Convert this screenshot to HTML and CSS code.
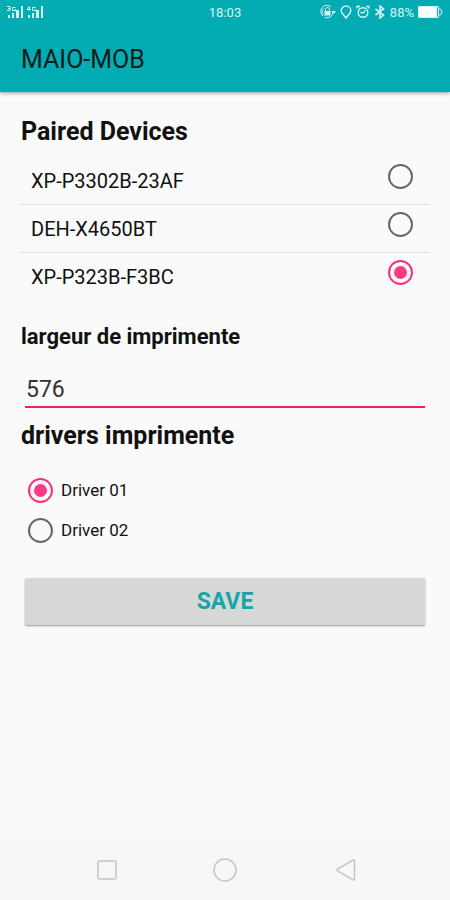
FILE: index.html
```html
<!DOCTYPE html>
<html lang="fr">
<head>
<meta charset="utf-8">
<meta name="viewport" content="width=device-width, initial-scale=1">
<title>MAIO-MOB</title>
<link rel="stylesheet" href="styles.css">
</head>
<body>
<header class="top">
  <div class="status">
    <div class="status-side">
      <svg class="signal" width="38" height="14" viewBox="0 0 38 14" fill="currentColor" aria-hidden="true">
        <g>
          <path d="M1 10h2v3H1zM5 8h2v5H5zM9 5h3v8H9zM14 1h2v12h-2z"/>
          <path d="M0 1.500h3v4H0M1 3.500h2M8.500 2.500H5.500v3h3v-1.500" fill="none" stroke="currentColor"/>
        </g>
        <g transform="translate(20 0)">
          <path d="M1 10h2v3H1zM5 8h2v5H5zM9 5h3v8H9zM14 1h2v12h-2z"/>
          <path d="M2.500 6V1.500L0 4.500h4M8.500 2.500H5.500v3h3v-1.500" fill="none" stroke="currentColor"/>
        </g>
      </svg>
    </div>
    <time class="clock">18:03</time>
    <div class="status-side status-right">
      <svg width="16" height="14" viewBox="0 0 16 14" fill="none" stroke="currentColor" aria-hidden="true">
        <path d="M11 1.800A6 6 0 0 0 3 11.200M5 12.500A6 6 0 0 0 13 7"/>
        <path d="M4 3.500a4.500 4.500 0 0 0 0 7" stroke-width=".8"/>
        <path d="M5.500 6V4.500a2 2 0 0 1 4 0V6"/>
        <path d="M4.500 6h6v4.500h-6zM11.500 6H16l-2.200 3z" fill="currentColor" stroke="none"/>
      </svg>
      <svg width="12" height="14" viewBox="0 0 12 14" fill="none" stroke="currentColor" stroke-width="1.500" aria-hidden="true">
        <path d="M6 1a4.800 4.800 0 0 1 4.800 4.800C10.800 8.600 8 10 6 13 4 10 1.200 8.600 1.200 5.800A4.800 4.800 0 0 1 6 1z"/>
      </svg>
      <svg width="14" height="14" viewBox="0 0 14 14" fill="none" stroke="currentColor" stroke-width="1.400" aria-hidden="true">
        <circle cx="7" cy="7.500" r="4.800"/>
        <path d="M1 3.500V1.500h3M13 3.500V1.500h-3M7 8l2.500-2.500M4.500 7.500L7 8"/>
      </svg>
      <svg width="12" height="14" viewBox="0 0 12 14" fill="none" stroke="currentColor" stroke-width="1.600" aria-hidden="true">
        <path d="M1.500 4l8 6L6 13V1l3.500 3-8 6"/>
      </svg>
      <span class="percent">88%</span>
      <svg class="battery" width="25" height="12" viewBox="0 0 25 12" aria-hidden="true">
        <path d="M.5.5h20v11H.5zM21 3h1.500l1.500 3-1.500 3H21" fill="none" stroke="currentColor"/>
        <path d="M1 1h18v10H1z" fill="#f4fffc"/>
      </svg>
    </div>
  </div>
  <h1 class="app-title">MAIO-MOB</h1>
</header>

<main class="content">
  <h2 class="heading">Paired Devices</h2>
  <div class="devices">
    <label class="device"><span>XP-P3302B-23AF</span><input class="radio" type="radio" name="device"></label>
    <label class="device"><span>DEH-X4650BT</span><input class="radio" type="radio" name="device"></label>
    <label class="device"><span>XP-P323B-F3BC</span><input class="radio" type="radio" name="device" checked></label>
  </div>

  <label class="heading heading-small" for="width">largeur de imprimente</label>
  <input class="field" id="width" type="text" inputmode="numeric" value="576">

  <h2 class="heading">drivers imprimente</h2>
  <div class="drivers">
    <label class="driver"><input class="radio" type="radio" name="driver" checked><span>Driver 01</span></label>
    <label class="driver"><input class="radio" type="radio" name="driver"><span>Driver 02</span></label>
  </div>

  <button class="save" type="button">SAVE</button>
</main>

<nav class="nav">
  <button class="nav-button" type="button" aria-label="Recents">
    <svg width="24" height="24" viewBox="0 0 24 24" fill="none" stroke="currentColor" stroke-width="1.500"><rect x="3" y="3" width="18" height="18" rx="1.500"/></svg>
  </button>
  <button class="nav-button" type="button" aria-label="Home">
    <svg width="24" height="24" viewBox="0 0 24 24" fill="none" stroke="currentColor" stroke-width="1.500"><circle cx="12" cy="12" r="11"/></svg>
  </button>
  <button class="nav-button" type="button" aria-label="Back">
    <svg width="30" height="24" viewBox="-6 0 30 24" fill="none" stroke="currentColor" stroke-width="1.500" stroke-linejoin="round"><path d="M3.500 11.200 19 2.200q1.500-.7 1.500 1v17.600q0 1.700-1.500 1L3.500 12.800q-1-.8 0-1.600z"/></svg>
  </button>
</nav>
</body>
</html>
```
FILE: styles.css
```css
* {
  box-sizing: border-box;
}

body {
  margin: 0;
  min-height: 100vh;
  display: flex;
  flex-direction: column;
  background: #fafafa;
  color: #111;
  font-family: Roboto, sans-serif;
}

.top {
  background: #03acb3;
  box-shadow: 0 1px 4px rgba(0, 0, 0, 0.4);
}

.status {
  display: flex;
  align-items: center;
  height: 24px;
  padding: 0 7px;
  color: #d5f5f5;
  font-size: 13px;
}

.status-side {
  flex: 1;
  display: flex;
  align-items: center;
}

.status-right {
  justify-content: flex-end;
  gap: 4px;
}

.app-title {
  margin: 0;
  padding: 3px 21px 0;
  color: #0a1a1a;
  font-size: 25px;
  font-weight: 400;
  line-height: 65px;
}

.content {
  flex: 1;
  padding: 24px 20px;
}

.heading {
  display: block;
  margin: 0;
  padding: 0 1px;
  font-size: 25px;
  font-weight: 700;
  line-height: 32px;
}

.heading-small {
  margin-top: 21px;
  font-size: 22px;
}

.devices {
  margin-top: 8px;
}

.device {
  display: flex;
  justify-content: space-between;
  height: 48px;
  padding: 8px 17px 0 11px;
  font-size: 20px;
  line-height: 34px;
}

.device + .device {
  padding-top: 7px;
  border-top: 1px solid #ddd;
}

.radio {
  appearance: none;
  flex: none;
  display: grid;
  place-items: center;
  width: 25px;
  height: 25px;
  margin: 0;
  border: 2px solid #666;
  border-radius: 50%;
}

.radio:checked {
  border-color: #f8307c;
}

.radio:checked::before {
  content: "";
  width: 13px;
  height: 13px;
  border-radius: 50%;
  background: #ff3a84;
}

.field {
  display: block;
  width: calc(100% - 10px);
  height: 41px;
  margin: 14px 5px 12px;
  padding: 5px 1px 0;
  border: 0;
  border-bottom: 2px solid #ee1c72;
  outline: 0;
  background: none;
  color: #333;
  font: 400 23px Roboto, sans-serif;
}

.drivers {
  margin: 18px 8px 0;
}

.driver {
  display: flex;
  align-items: center;
  gap: 8px;
  height: 40px;
  font-size: 17px;
}

.save {
  display: block;
  width: calc(100% - 10px);
  height: 47px;
  margin: 28px 5px 0;
  border: 0;
  border-radius: 2px;
  background: #d6d8d7;
  box-shadow: 0 1px 2px rgba(0, 0, 0, 0.4);
  color: #17a5aa;
  font: 700 23px Roboto, sans-serif;
}

.nav {
  display: flex;
  justify-content: space-between;
  height: 60px;
  padding: 0 83px;
  background: #f7f7f7;
}

.nav-button {
  display: grid;
  place-items: center;
  width: 48px;
  padding: 0;
  border: 0;
  background: none;
  color: #c4c4c4;
}
```
